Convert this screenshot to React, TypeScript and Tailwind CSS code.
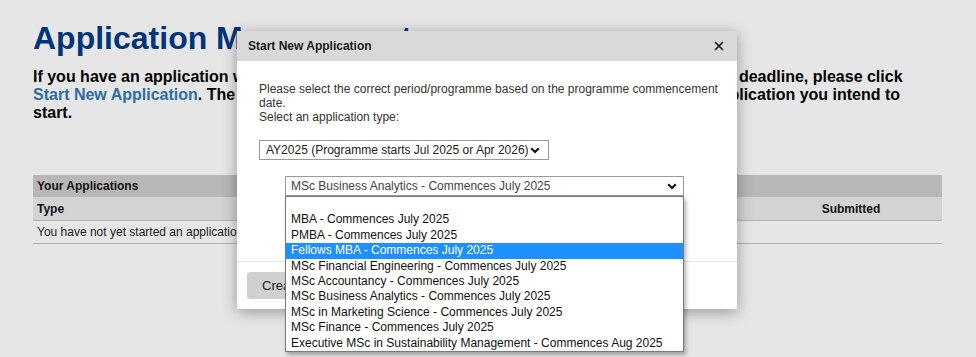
import React from "react";

const options = [
  "",
  "MBA - Commences July 2025",
  "PMBA - Commences July 2025",
  "Fellows MBA - Commences July 2025",
  "MSc Financial Engineering - Commences July 2025",
  "MSc Accountancy - Commences July 2025",
  "MSc Business Analytics - Commences July 2025",
  "MSc in Marketing Science - Commences July 2025",
  "MSc Finance - Commences July 2025",
  "Executive MSc in Sustainability Management - Commences Aug 2025",
];

function Chevron() {
  return (
    <svg width="10" height="7" viewBox="0 0 10 7" className="shrink-0">
      <path d="M1.2 1.2 L5 5 L8.8 1.2" fill="none" stroke="#111" strokeWidth="2.1" />
    </svg>
  );
}

export default function App() {
  return (
    <div className="relative min-h-[357px] w-[976px] overflow-hidden bg-[#e6e6e6] font-['Liberation_Sans',Arial,sans-serif]">
      <div className="w-[909px] ml-[33px] pt-[20px]">
        <h1 className="text-[32px] leading-[36px] font-bold text-[#003478] whitespace-nowrap">
          Application Management
        </h1>
        <p className="mt-[12px] text-[16px] leading-[18px] font-bold text-black whitespace-nowrap">
          If you have an application which you have not yet submitted and it is still before the relevant deadline, please click
          <br />
          <span className="text-[#2e6da4]">Start New Application</span>. The next stage will allow you to select the programme and type of application you intend to
          <br />
          start.
        </p>

        <div className="mt-[53px] text-[12px]">
          <div className="h-[22px] bg-[#b7b7b7] flex items-center px-[4px] font-bold text-[#111]">
            Your Applications
          </div>
          <div className="h-[24px] bg-[#d3d3d3] flex items-center border-b border-[#b3b3b3] font-bold text-[#111]">
            <div className="flex-1 px-[4px]">Type</div>
            <div className="w-[180px] px-[4px]">Programme</div>
            <div className="w-[120px] px-[4px]">Status</div>
            <div className="w-[182px] text-center">Submitted</div>
          </div>
          <div className="h-[23px] flex items-center border-b border-[#b3b3b3] px-[4px] text-[#222]">
            You have not yet started an application.
          </div>
        </div>
      </div>

      {/* Modal dialog */}
      <div className="absolute left-[237px] top-[31px] w-[500px] bg-white shadow-[0_3px_14px_rgba(0,0,0,0.35)]">
        <div className="h-[30px] bg-[#d9d9d9] flex items-center justify-between pl-[11px] pr-[13px]">
          <span className="text-[12px] font-bold text-[#1a1a1a]">Start New Application</span>
          <svg width="10" height="10" viewBox="0 0 10 10">
            <path d="M1 1 L9 9 M9 1 L1 9" stroke="#111" strokeWidth="1.6" />
          </svg>
        </div>
        <div className="pt-[21px] pb-[65px] pl-[22px] text-[12px] leading-[14px] text-[#333]">
          <div className="whitespace-nowrap">
            Please select the correct period/programme based on the programme commencement
            <br />
            date.
            <br />
            Select an application type:
          </div>
          <div className="mt-[16px] w-[290px] h-[20px] border border-[#9a9a9a] flex items-center justify-between pl-[6px] pr-[8px] text-[#222]">
            <span className="whitespace-nowrap">AY2025 (Programme starts Jul 2025 or Apr 2026)</span>
            <Chevron />
          </div>
          <div className="relative mt-[16px] ml-[26px] w-[399px]">
            <div className="h-[20px] border border-[#9a9a9a] flex items-center justify-between pl-[5px] pr-[6px] text-[#444]">
              <span className="whitespace-nowrap">MSc Business Analytics - Commences July 2025</span>
              <Chevron />
            </div>
            <div className="absolute left-0 top-full w-[399px] bg-white border border-[#7a7a7a] shadow-[2px_3px_4px_rgba(0,0,0,0.3)] z-10">
              {options.map((o, i) => (
                <div
                  key={i}
                  className={
                    i === 3
                      ? "h-[15.4px] leading-[15.4px] pl-[5px] bg-[#1e90ff] text-white whitespace-nowrap"
                      : "h-[15.4px] leading-[15.4px] pl-[5px] text-[#111] whitespace-nowrap"
                  }
                >
                  {o}
                </div>
              ))}
            </div>
          </div>
        </div>
        <div className="border-t border-[#e5e5e5] pt-[10px] pb-[10px] pl-[10px]">
          <button className="h-[27px] px-[15px] rounded-[3px] bg-[#d0d0d0] text-[13px] text-[#222]">
            Create Application
          </button>
        </div>
      </div>
    </div>
  );
}
